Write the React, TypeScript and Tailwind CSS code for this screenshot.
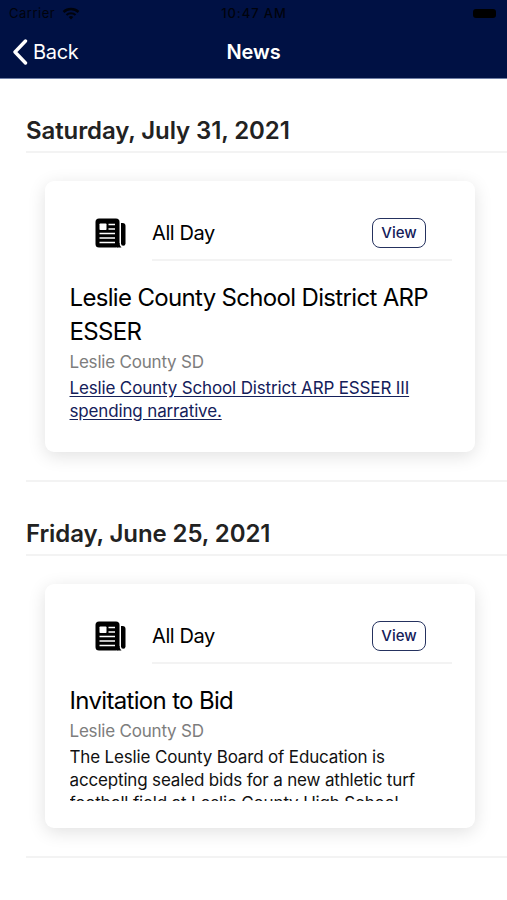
import React from 'react';

type NewsItem = {
  date: string;
  title: string;
  source: string;
  body: string;
  isLink?: boolean;
};

const newsItems: NewsItem[] = [
  {
    date: 'Saturday, July 31, 2021',
    title: 'Leslie County School District ARP ESSER',
    source: 'Leslie County SD',
    body: 'Leslie County School District ARP ESSER III spending narrative.',
    isLink: true,
  },
  {
    date: 'Friday, June 25, 2021',
    title: 'Invitation to Bid',
    source: 'Leslie County SD',
    body: 'The Leslie County Board of Education is accepting sealed bids for a new athletic turf football field at Leslie County High School.',
  },
];

const NewspaperIcon = () => (
  <svg viewBox="0 0 32 30" className="w-8 h-[30px] shrink-0" fill="none">
    <rect x="0.500" y="0.500" width="24" height="29" rx="3.5" fill="#000" />
    <path d="M22 25h2.500c0 2 .8 3.400 2 4.500H22z" fill="#000" />
    <path d="M26 5h1.500a3 3 0 0 1 3 3v17.500a2.200 2.200 0 0 1-4.500 0z" fill="#000" />
    <rect x="4.500" y="5.500" width="7" height="6.500" rx="0.8" fill="#fff" />
    <path d="M13.500 6.500h6.500M13.500 11h6.500M4.500 15.500h15.500M4.500 20h15.500M4.500 24.500h15.500" stroke="#fff" strokeWidth="1.700" />
  </svg>
);

const WifiIcon = () => (
  <svg viewBox="0 0 18 13" className="w-[18px] h-[13px]" fill="none" stroke="#00030c">
    <path d="M1.500 5a11 11 0 0 1 15 0" strokeWidth="2.400" />
    <path d="M4.500 8a6.700 6.700 0 0 1 9 0" strokeWidth="2.200" />
    <path d="M9 12.500 6.700 10a3.400 3.400 0 0 1 4.600 0z" fill="#00030c" stroke="none" />
  </svg>
);

const Header = () => (
  <header className="h-[79px] bg-[#001144] border-b border-[#6f7fa5]">
    <div className="grid h-[27px] grid-cols-3 items-center pl-[9px] pr-[11px] text-[13px] text-[#00030c]">
      <div className="flex items-center gap-[7px]">
        <span className="tracking-[0.5px]">Carrier</span>
        <WifiIcon />
      </div>
      <span className="pl-[3px] text-center font-medium tracking-[0.9px] whitespace-nowrap">10:47 AM</span>
      <span className="h-[9px] w-[23px] justify-self-end rounded-[3px] bg-black" />
    </div>
    <div className="grid h-[50px] grid-cols-3 items-center text-white">
      <button className="flex items-center pl-[7px] text-[20px] tracking-[-0.3px]">
        <svg viewBox="0 0 16 26" className="ml-[5px] mr-[5px] h-[26px] w-4" fill="none">
          <path d="M13.500 2 3 13l10.500 11" stroke="#fff" strokeWidth="3.400" strokeLinecap="round" strokeLinejoin="round" />
        </svg>
        Back
      </button>
      <h1 className="text-center text-[20px] font-semibold tracking-[-0.1px]">News</h1>
    </div>
  </header>
);

const NewsCard = ({ item }: { item: NewsItem }) => (
  <article className="ml-[19px] mr-8 rounded-[9px] bg-white pl-[24.5px] pr-[23px] pb-[27px] shadow-[0_4px_18px_rgba(0,0,0,0.12)]">
    <div className="flex pl-[25.5px] pt-[26px]">
      <div className="w-[57px] pt-[11px]">
        <NewspaperIcon />
      </div>
      <div className="flex h-[54px] flex-1 items-center justify-between border-b-2 border-[#f3f3f3] pr-[26px]">
        <span className="text-[20px] tracking-[-0.4px]">All Day</span>
        <button className="h-[30px] w-[54px] rounded-[8px] border border-[#25325f] text-[15px] font-medium text-[#14205a]">
          View
        </button>
      </div>
    </div>
    <h3 className="mt-5 text-[24px] leading-[34px] tracking-[-0.67px]">{item.title}</h3>
    <p className="mb-[2px] text-[17px] leading-[26px] tracking-[-0.2px] text-[#7d7d7d]">{item.source}</p>
    {item.isLink ? (
      <a href="#" className="block h-12 text-[17px] leading-[23px] tracking-[-0.15px] text-[#14205a] underline underline-offset-2">
        {item.body}
      </a>
    ) : (
      <p className="h-[55px] overflow-hidden text-[17px] leading-[23px] tracking-[-0.16px] text-[#111]">{item.body}</p>
    )}
  </article>
);

const App = () => {
  return (
    <div className="h-[900px] w-full overflow-hidden bg-white font-['Inter',sans-serif] text-black">
      <Header />
      <main className="pl-[26px]">
        {newsItems.map((item) => (
          <section key={item.date} className="border-b-2 border-[#f3f3f3] pb-[28px]">
            <h2 className="flex h-[74px] items-end border-b-2 border-[#f3f3f3] pb-1 text-[24px] font-semibold leading-[32px] tracking-[-0.1px] text-[#222]">
              {item.date}
            </h2>
            <div className="pt-[28px]">
              <NewsCard item={item} />
            </div>
          </section>
        ))}
        <h2 className="pt-9 text-[24px] font-semibold leading-[32px] tracking-[-0.2px] text-[#222]">
          Tuesday, May 25, 2021
        </h2>
      </main>
    </div>
  );
};

export default App;
